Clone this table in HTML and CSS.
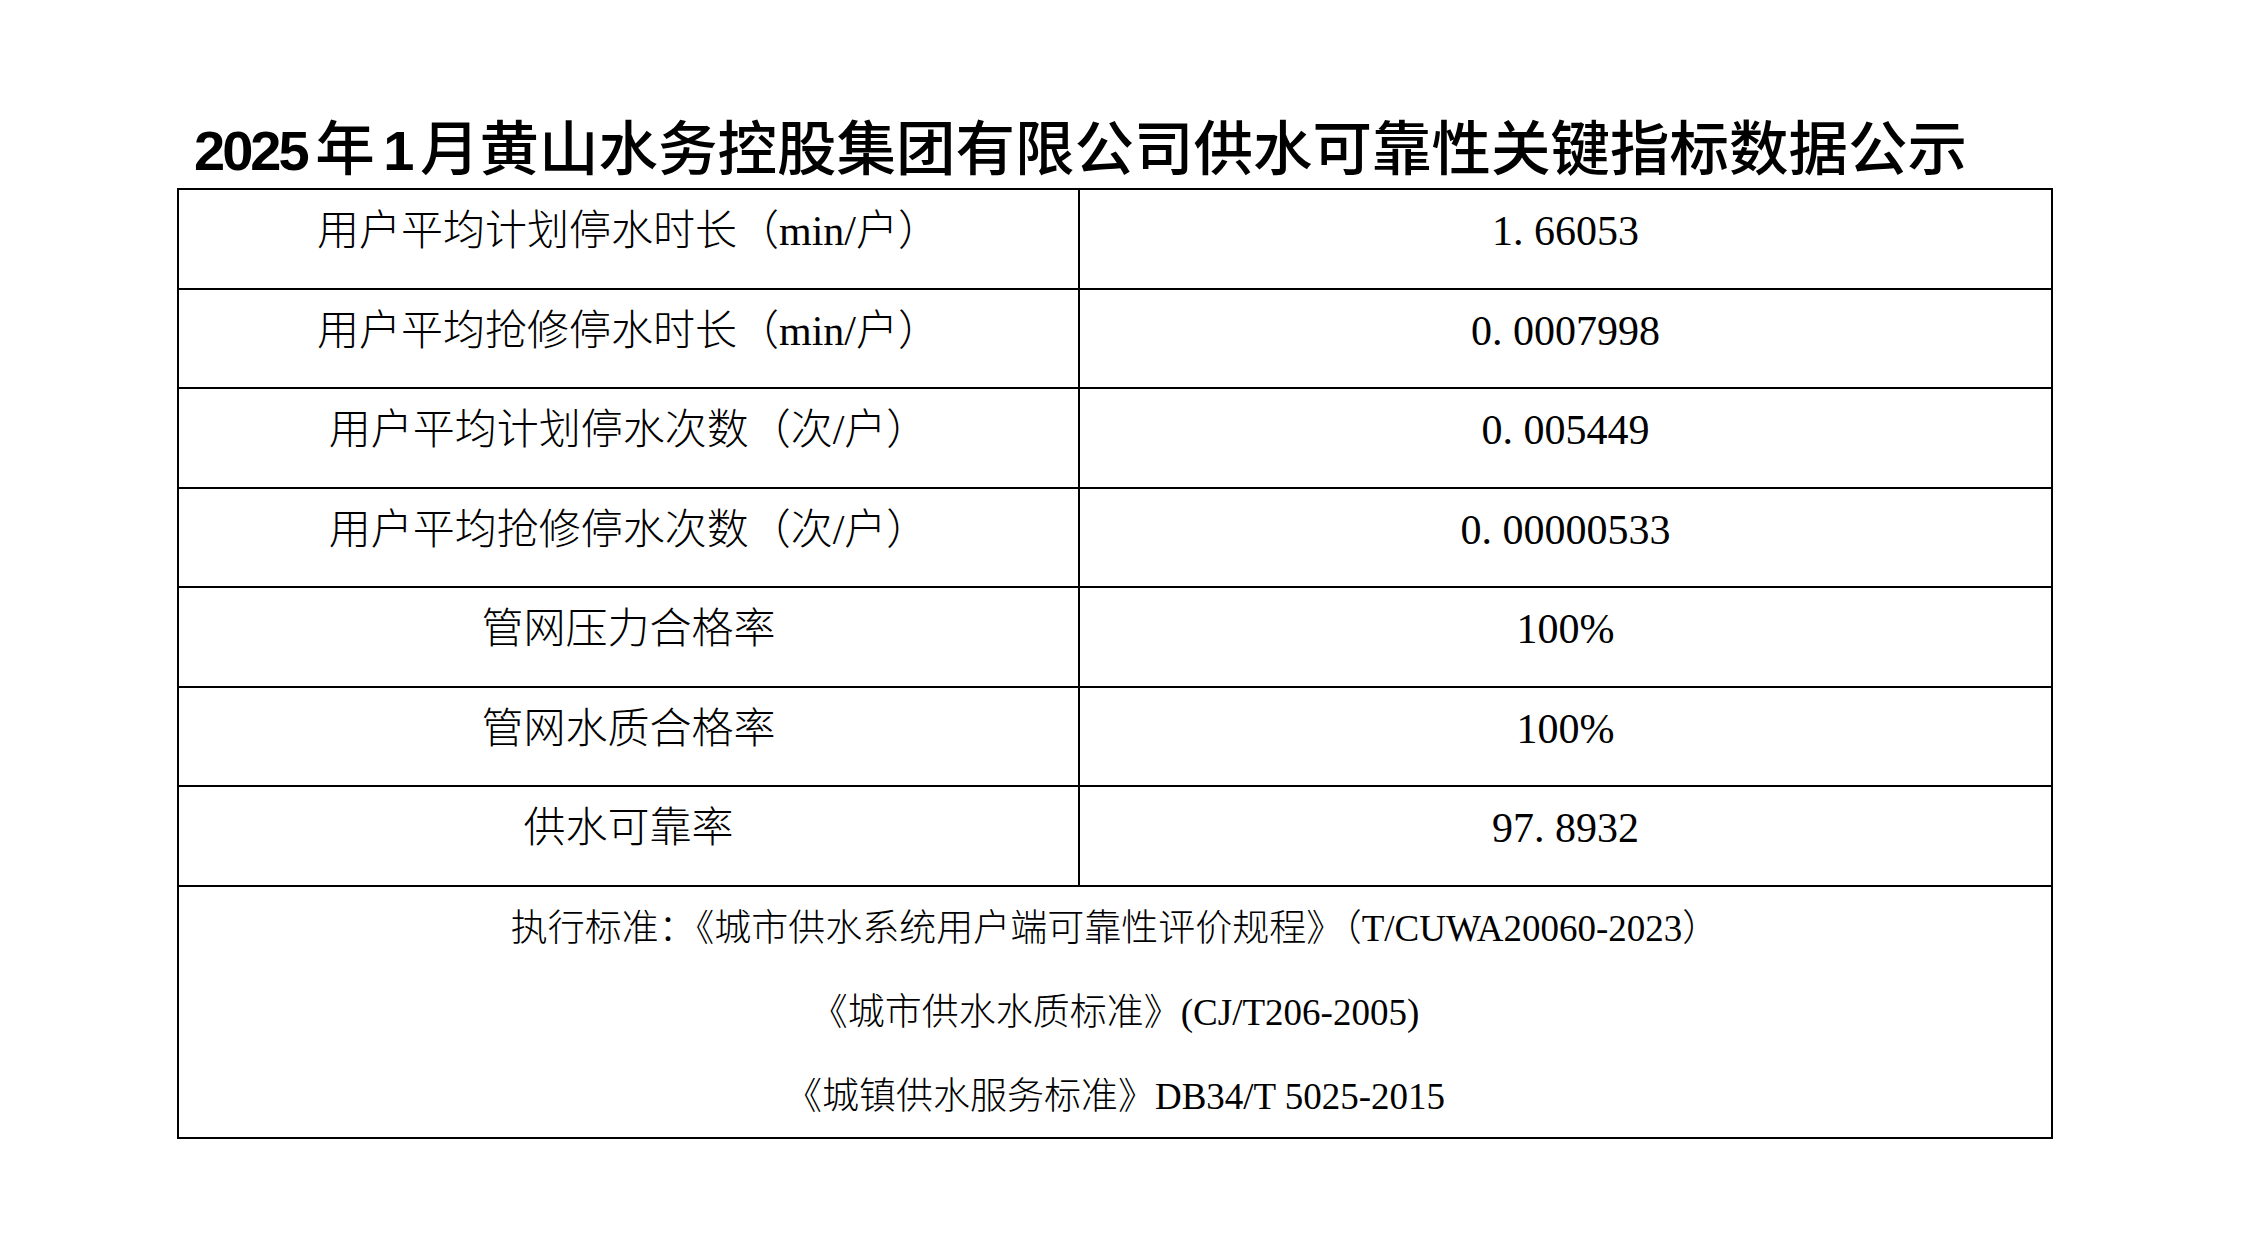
FILE: index.html
```html
<!DOCTYPE html>
<html lang="zh-CN">
<head>
<meta charset="utf-8">
<title>2025年1月黄山水务控股集团有限公司供水可靠性关键指标数据公示</title>
<link rel="stylesheet" href="styles.css">
</head>
<body>
<div class="page">
  <h1 class="title"><span class="num">2025 </span>年<span class="num"> 1 </span>月黄山水务控股集团有限公司供水可靠性关键指标数据公示</h1>
  <div class="sheet">
    <div class="grid">
      <div class="cell label">用户平均计划停水时长（min/户）</div>
      <div class="cell value">1<span class="dot">.</span>66053</div>
      <div class="cell label">用户平均抢修停水时长（min/户）</div>
      <div class="cell value">0<span class="dot">.</span>0007998</div>
      <div class="cell label">用户平均计划停水次数（次/户）</div>
      <div class="cell value">0<span class="dot">.</span>005449</div>
      <div class="cell label">用户平均抢修停水次数（次/户）</div>
      <div class="cell value">0<span class="dot">.</span>00000533</div>
      <div class="cell label">管网压力合格率</div>
      <div class="cell value">100%</div>
      <div class="cell label">管网水质合格率</div>
      <div class="cell value">100%</div>
      <div class="cell label">供水可靠率</div>
      <div class="cell value">97<span class="dot">.</span>8932</div>
    </div>
    <div class="notes">
      <p class="note">执行标准：《城市供水系统用户端可靠性评价规程》（T/CUWA20060-2023）</p>
      <p class="note">《城市供水水质标准》(CJ/T206-2005)</p>
      <p class="note">《城镇供水服务标准》DB34/T 5025-2015</p>
    </div>
  </div>
</div>
</body>
</html>
```

FILE: styles.css
```css
html, body {
  margin: 0;
  padding: 0;
  background: #ffffff;
}

.page {
  width: 2245px;
  height: 1255px;
  padding-top: 114px;
  box-sizing: border-box;
  color: #000000;
}

.title {
  margin: 0 0 14px 0;
  padding-left: 194px;
  height: 60px;
  font-family: "Noto Sans CJK SC", sans-serif;
  font-size: 59.5px;
  line-height: 60px;
  font-weight: 500;
  white-space: nowrap;
}

.num {
  font-family: "Liberation Sans", "Noto Sans CJK SC", sans-serif;
  font-size: 56px;
  font-weight: 700;
  letter-spacing: -3px;
  word-spacing: -4px;
}

.sheet {
  margin-left: 177px;
  width: 1876px;
  box-sizing: border-box;
  border: 2px solid #000000;
}

.grid {
  display: grid;
  grid-template-columns: 901px 1fr;
}

.cell {
  box-sizing: border-box;
  height: 99.57px;
  border-bottom: 2px solid #000000;
  padding-top: 20px;
  text-align: center;
  font-family: "Liberation Serif", "Noto Sans CJK SC", serif;
  font-size: 42px;
  line-height: 42px;
  font-weight: 300;
  white-space: nowrap;
}

.label {
  border-right: 2px solid #000000;
}

.dot {
  display: inline-block;
  width: 0.5em;
  text-align: left;
}

.notes {
  height: 250px;
}

.note {
  margin: 0;
  text-align: center;
  font-family: "Liberation Serif", "Noto Sans CJK SC", serif;
  font-size: 37px;
  line-height: 84px;
  font-weight: 300;
  white-space: nowrap;
}
```
